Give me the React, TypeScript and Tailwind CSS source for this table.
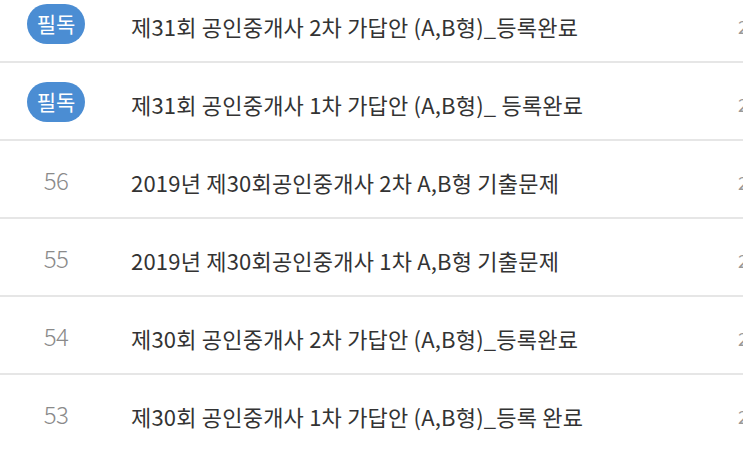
const rows = [
  { no: null, title: "제31회 공인중개사 2차 가답안 (A,B형)_등록완료", date: "2020.10.31" },
  { no: null, title: "제31회 공인중개사 1차 가답안 (A,B형)_ 등록완료", date: "2020.10.31" },
  { no: "56", title: "2019년 제30회공인중개사 2차 A,B형 기출문제", date: "2019.11.12" },
  { no: "55", title: "2019년 제30회공인중개사 1차 A,B형 기출문제", date: "2019.11.12" },
  { no: "54", title: "제30회 공인중개사 2차 가답안 (A,B형)_등록완료", date: "2019.10.26" },
  { no: "53", title: "제30회 공인중개사 1차 가답안 (A,B형)_등록 완료", date: "2019.10.26" },
]

export default function App() {
  return (
    <div
      className="w-[743px] h-[451px] overflow-hidden bg-white"
      style={{ fontFamily: '"Noto Sans CJK KR", "Noto Sans", sans-serif' }}
    >
      <ul className="-mt-[15px]">
        {rows.map((row, i) => (
          <li key={i} className="flex h-[78px] items-center border-b-2 border-[#e6e6e6] pt-[2px]">
            <div className="flex w-[112px] shrink-0 justify-center">
              {row.no ? (
                <span className="text-[24px] font-light tracking-[-0.5px] text-[#8a8a8a]">{row.no}</span>
              ) : (
                <span className="flex h-[40px] w-[58px] items-center justify-center rounded-full bg-[#4b8dd3] text-[21px] text-white">
                  필독
                </span>
              )}
            </div>
            <div className="ml-[19px] flex-1 whitespace-nowrap pt-[4px] text-[22px] tracking-[0.2px] text-[#333333]">
              {row.title}
            </div>
            <div className="w-[5px] shrink-0 overflow-hidden whitespace-nowrap pt-[4px] text-[18px] text-[#999999]">
              {row.date}
            </div>
          </li>
        ))}
      </ul>
    </div>
  )
}
